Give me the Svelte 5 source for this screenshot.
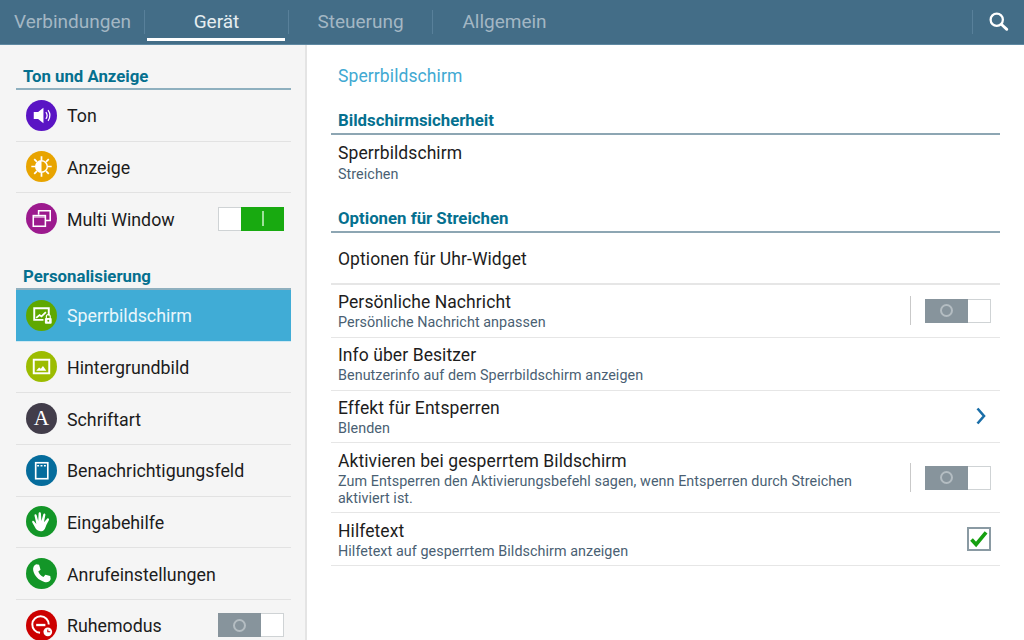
<script>
  const tabs = [
    { label: 'Verbindungen', w: 143 },
    { label: 'Gerät', w: 143, active: true },
    { label: 'Steuerung', w: 143 },
    { label: 'Allgemein', w: 143 }
  ];
  const group1 = [
    { label: 'Ton', color: '#5a14c4', icon: 'sound' },
    { label: 'Anzeige', color: '#e8a400', icon: 'sun' },
    { label: 'Multi Window', color: '#9c1a8e', icon: 'windows', toggle: 'on', last: true }
  ];
  const group2 = [
    { label: 'Sperrbildschirm', color: '#5fa800', icon: 'lock', active: true },
    { label: 'Hintergrundbild', color: '#9cbc00', icon: 'picture' },
    { label: 'Schriftart', color: '#423d4a', icon: 'font' },
    { label: 'Benachrichtigungsfeld', color: '#056c9c', icon: 'panel' },
    { label: 'Eingabehilfe', color: '#139628', icon: 'hand' },
    { label: 'Anrufeinstellungen', color: '#139628', icon: 'phone' },
    { label: 'Ruhemodus', color: '#cc0000', icon: 'quiet', toggle: 'off' }
  ];
  const options = [
    { title: 'Persönliche Nachricht', sub: 'Persönliche Nachricht anpassen', control: 'toggle' },
    { title: 'Info über Besitzer', sub: 'Benutzerinfo auf dem Sperrbildschirm anzeigen' },
    { title: 'Effekt für Entsperren', sub: 'Blenden', control: 'chevron' },
    { title: 'Aktivieren bei gesperrtem Bildschirm', sub: 'Zum Entsperren den Aktivierungsbefehl sagen, wenn Entsperren durch Streichen aktiviert ist.', control: 'toggle', tall: true },
    { title: 'Hilfetext', sub: 'Hilfetext auf gesperrtem Bildschirm anzeigen', control: 'check' }
  ];
</script>

{#snippet glyph(name)}
  <svg class="glyph" viewBox="0 0 32 32" aria-hidden="true">
    {#if name === 'sound'}
      <path d="M8 12.500h4.500L18 8v16l-5.500-4.500H8z" fill="#fff"/>
      <path d="M20.500 12.500c1.500 2 1.500 5 0 7M22.800 10.500c2.300 3.300 2.300 7.700 0 11" fill="none" stroke="#fff" stroke-width="1.300"/>
    {:else if name === 'sun'}
      <path d="M16 5.500v4M16 22.500v4M5.500 16h4M22.500 16h4M8.500 8.500l2.800 2.800M20.700 20.700l2.800 2.800M8.500 23.500l2.800-2.800M20.700 11.300l2.800-2.800" stroke="#fff" stroke-width="1.800"/>
      <circle cx="16" cy="16" r="6" fill="none" stroke="#fff" stroke-width="1.500"/>
      <path d="M16 10a6 6 0 0 0 0 12z" fill="#fff"/>
    {:else if name === 'windows'}
      <path d="M13 12V8h12v10h-5" fill="none" stroke="#fff" stroke-width="1.600"/>
      <rect x="7.500" y="13" width="12.500" height="11" fill="none" stroke="#fff" stroke-width="1.600"/>
      <path d="M7.500 14.500h12.500" stroke="#fff" stroke-width="1"/>
    {:else if name === 'lock'}
      <path d="M18 20.500H8.500V8.500h15v7.500" fill="none" stroke="#fff" stroke-width="2"/>
      <path d="M10.500 18.500l3.500-3 2 1.500 4.500-4.500" fill="none" stroke="#fff" stroke-width="1.800"/>
      <rect x="19.500" y="18.500" width="7" height="6" rx="1" fill="#fff"/>
      <path d="M21 18.500v-1.500a2 2 0 0 1 4 0v1.500" fill="none" stroke="#fff" stroke-width="1.200"/>
      <circle cx="23" cy="21.500" r="1" fill="#5fa800"/>
    {:else if name === 'picture'}
      <rect x="8" y="9" width="16" height="14" fill="none" stroke="#fff" stroke-width="2"/>
      <path d="M10.500 20.500l3-3.500 1.800 1.200 2.200-2.700 3.500 5z" fill="#fff"/>
    {:else if name === 'font'}
      <text x="16" y="23" text-anchor="middle" class="font-a">A</text>
    {:else if name === 'panel'}
      <rect x="10" y="8" width="12.500" height="16.500" fill="none" stroke="#fff" stroke-width="1.700"/>
      <path d="M11.500 11h10" stroke="#fff" stroke-width="1.600" stroke-dasharray="2 1.500"/>
    {:else if name === 'hand'}
      <path d="M15 26c-3 0-4.500-1.500-6-4.500L6.500 17c-.7-1.400 1-2.300 2-1.100l2.200 2.700L8.800 10c-.3-1.600 1.800-2 2.200-.4l1.600 5.900L13 7.800c.1-1.700 2.300-1.700 2.400 0l.5 7.600 1.900-6.700c.5-1.500 2.500-1 2.200.6l-1.500 7.400 3.300-3.600c1-1.100 2.600.2 1.800 1.500L21 19.500C19.500 24 18.500 26 15 26z" fill="#fff"/>
    {:else if name === 'phone'}
      <path d="M10.500 6.500l3 .5 1.500 5-2.300 2c1 2.700 2.600 4.400 5.300 5.500l2-2.300 5 1.500.5 3c-1 3-4 4-6.500 3-6.500-2-10-6-11.500-11.500-.7-3 .5-5.700 3-6.700z" fill="#fff"/>
    {:else if name === 'quiet'}
      <path d="M14.500 23.500a8.500 8.500 0 1 1 9-8.500" fill="none" stroke="#fff" stroke-width="2"/>
      <path d="M10.500 15.500h9.500" stroke="#fff" stroke-width="2.400"/>
      <circle cx="22.500" cy="22.500" r="4.500" fill="#fff"/>
      <path d="M22.500 20V22.500h2.500" fill="none" stroke="#cc0000" stroke-width="1.100"/>
    {/if}
  </svg>
{/snippet}

{#snippet toggle(state)}
  <span class="toggle {state}">
    {#if state === 'on'}
      <span class="blank"></span><span class="thumb on"><i class="bar"></i></span>
    {:else}
      <span class="thumb off"><i class="ring"></i></span><span class="blank"></span>
    {/if}
  </span>
{/snippet}

{#snippet navrow(item)}
  <div class="navrow" class:active={item.active} class:last={item.last}>
    <span class="disc" style="background:{item.color}">{@render glyph(item.icon)}</span>
    <span class="navlabel">{item.label}</span>
    {#if item.toggle}<span class="navtoggle">{@render toggle(item.toggle)}</span>{/if}
  </div>
{/snippet}

<div class="screen">
  <header class="topbar">
    {#each tabs as tab, i}
      {#if i > 0}<span class="tabsep"></span>{/if}
      <div class="tab" class:active={tab.active} style="width:{tab.w}px"><span>{tab.label}</span></div>
    {/each}
    <span class="grow"></span>
    <span class="tabsep end"></span>
    <svg class="search" viewBox="0 0 24 24" aria-hidden="true">
      <circle cx="10" cy="10" r="7" fill="none" stroke="#fff" stroke-width="2.600"/>
      <path d="M15.500 15.500l6 5.500" stroke="#fff" stroke-width="3.200" stroke-linecap="round"/>
    </svg>
  </header>
  <div class="body">
    <aside class="side">
      <h2 class="sec group">Ton und Anzeige</h2>
      {#each group1 as item}{@render navrow(item)}{/each}
      <h2 class="sec group">Personalisierung</h2>
      {#each group2 as item}{@render navrow(item)}{/each}
    </aside>
    <main class="content">
      <h1 class="crumb">Sperrbildschirm</h1>
      <h2 class="sec main">Bildschirmsicherheit</h2>
      <div class="opt plain">
        <div class="title">Sperrbildschirm</div>
        <div class="sub">Streichen</div>
      </div>
      <h2 class="sec main next">Optionen für Streichen</h2>
      <div class="opt single"><div class="title">Optionen für Uhr-Widget</div></div>
      {#each options as o}
        <div class="opt" class:tall={o.tall}>
          <div class="text">
            <div class="title">{o.title}</div>
            <div class="sub">{o.sub}</div>
          </div>
          {#if o.control === 'toggle'}
            <span class="vsep"></span>
            {@render toggle('off')}
          {:else if o.control === 'chevron'}
            <svg class="chev" viewBox="0 0 10 18" aria-hidden="true"><path d="M1.500 1.500L8 9l-6.500 7.500" fill="none" stroke="#1a6ea8" stroke-width="2.600"/></svg>
          {:else if o.control === 'check'}
            <span class="check"><svg viewBox="0 0 24 24" aria-hidden="true"><path d="M3 12.500l5.500 6L20.500 4" fill="none" stroke="#16a010" stroke-width="4.400"/></svg></span>
          {/if}
        </div>
      {/each}
    </main>
  </div>
</div>

<style>
  :global(body) { margin: 0; }
  .screen {
    width: 1024px; height: 640px; overflow: hidden;
    display: flex; flex-direction: column;
    font-family: Roboto, "Liberation Sans", sans-serif;
    background: #fff;
  }
  .topbar {
    flex: 0 0 45px; box-sizing: border-box; height: 45px;
    background: #436d87; border-bottom: 1px solid #5f89a2;
    display: flex; align-items: center; padding-left: 1px;
  }
  .tab {
    box-sizing: border-box; height: 44px; display: flex; align-items: center; justify-content: center;
    font-size: 19px; color: #a3b7c4; padding-bottom: 1px;
  }
  .tab.active { color: #e6edf1; position: relative; }
  .tab.active::after {
    content: ""; position: absolute; left: 2px; right: 3px; bottom: 3px; height: 3px; background: #fff;
  }
  .tabsep { width: 1px; height: 24px; background: #58809a; flex: none; margin-bottom: 1px; }
  .grow { flex: 1; }
  .tabsep.end { margin-right: 15px; }
  .search { width: 21px; height: 21px; margin-right: 15px; margin-bottom: 1px; }
  .body { flex: 1; display: flex; min-height: 0; }
  .side {
    width: 307px; flex: none; box-sizing: border-box; background: #f5f5f5;
    border-right: 2px solid #e4e4e4; padding: 0 14px 0 16px; overflow: hidden;
  }
  .sec { margin: 0; font-size: 16.800px; font-weight: 700; color: #05708f; box-sizing: border-box; }
  .sec.group {
    height: 45px; padding: 20px 0 0 7px; line-height: 22px; border-bottom: 2px solid #8fb0bf;
  }
  .navrow {
    height: 51.670px; box-sizing: border-box; display: flex; align-items: center; padding-left: 10px;
    border-bottom: 1px solid #e2e2e2;
  }
  .navrow.last { border-bottom-color: transparent; }
  .navrow.active { background: #40acd6; border-bottom-color: #cfe8f2; }
  .disc {
    width: 31px; height: 31px; border-radius: 50%; flex: none; display: flex; align-items: center; justify-content: center;
  }
  .glyph { width: 31px; height: 31px; display: block; }
  .font-a { font-family: "Liberation Serif", serif; font-size: 22px; fill: #fff; }
  .navlabel { margin-left: 10px; padding-top: 1px; font-size: 17.800px; color: #1c1c1c; }
  .navrow.active .navlabel { color: #e8f6fb; }
  .navtoggle { margin-left: auto; margin-right: 7px; display: flex; }
  .toggle {
    width: 66px; height: 24px; box-sizing: border-box; display: flex; flex: none;
    border: 1px solid #cfd3d5; background: #fff;
  }
  .blank { flex: 1; background: #fff; }
  .thumb { width: 43px; margin: -1px; display: flex; align-items: center; justify-content: center; }
  .thumb.off { background: #87949c; margin-right: 0; }
  .thumb.on { background: #18aa10; margin-left: 0; }
  .ring { width: 13px; height: 13px; box-sizing: border-box; border: 2px solid #b4bdc2; border-radius: 50%; }
  .bar { width: 2px; height: 15px; background: #9ee09a; }
  .content { flex: 1; min-width: 0; padding: 0 24px; box-sizing: border-box; }
  .crumb {
    margin: 0; font-size: 17.500px; font-weight: 400; color: #41a9d2; height: 59px; line-height: 62px;
    padding-left: 7px; letter-spacing: .1px;
  }
  .sec.main {
    height: 31px; line-height: 33px; padding-left: 7px; border-bottom: 2px solid #8da6b3;
  }
  .sec.next { height: 32px; line-height: 34px; }
  .opt {
    display: flex; align-items: center; box-sizing: border-box; height: 52.750px;
    border-bottom: 1px solid #e6e6e6; padding: 0 9px 0 7px;
  }
  .opt.plain { display: block; border: 0; height: 66px; padding-top: 6px; }
  .opt.single { border-bottom-width: 2px; height: 52px; padding-top: 2px; }
  .opt.tall { height: 70px; }
  .text { flex: 1; min-width: 0; }
  .title { font-size: 17.500px; color: #1d1d1d; line-height: 24px; letter-spacing: .08px; }
  .sub { font-size: 14.350px; line-height: 17px; color: #4a5f73; letter-spacing: .06px; }
  .plain .sub { margin-top: 1px; }
  .tall .sub { width: 540px; }
  .vsep { width: 1px; height: 29px; background: #c9c9c9; margin: 0 14px 0 12px; flex: none; }
  .chev { width: 10px; height: 18px; margin-right: 5px; }
  .check {
    width: 24px; height: 24px; box-sizing: border-box; border: 2px solid #8a9aa3; background: #fff; display: block;
  }
  .check svg { display: block; width: 20px; height: 20px; }
</style>
